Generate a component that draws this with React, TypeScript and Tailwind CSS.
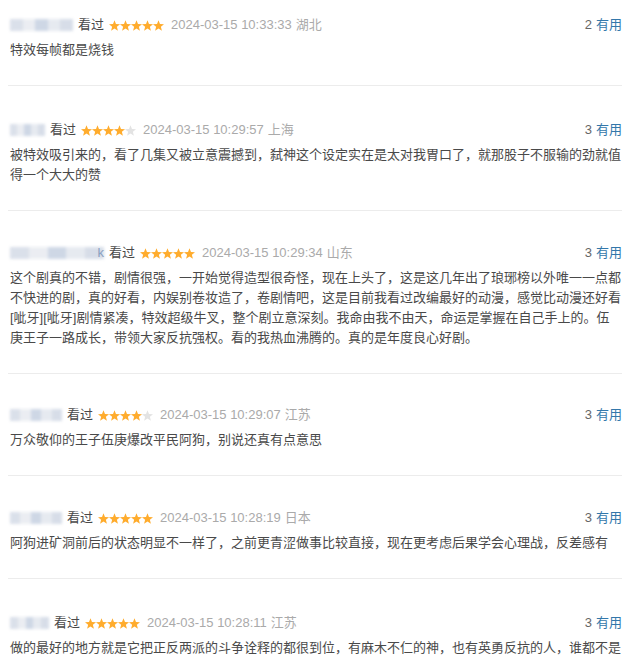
import React from "react";

type Item = {
  userW: number;
  suffix?: string;
  rating: number;
  time: string;
  loc: string;
  votes: number;
  text: string;
  pt: number;
};

const items: Item[] = [
  { userW: 63, rating: 5, time: "2024-03-15 10:33:33", loc: "湖北", votes: 2, text: "特效每帧都是烧钱", pt: 15 },
  { userW: 35, rating: 4, time: "2024-03-15 10:29:57", loc: "上海", votes: 3, text: "被特效吸引来的，看了几集又被立意震撼到，弑神这个设定实在是太对我胃口了，就那股子不服输的劲就值得一个大大的赞", pt: 34 },
  { userW: 94, suffix: "k", rating: 5, time: "2024-03-15 10:29:34", loc: "山东", votes: 3, text: "这个剧真的不错，剧情很强，一开始觉得造型很奇怪，现在上头了，这是这几年出了琅琊榜以外唯一一点都不快进的剧，真的好看，内娱别卷妆造了，卷剧情吧，这是目前我看过改编最好的动漫，感觉比动漫还好看[呲牙][呲牙]剧情紧凑，特效超级牛叉，整个剧立意深刻。我命由我不由天，命运是掌握在自己手上的。伍庚王子一路成长，带领大家反抗强权。看的我热血沸腾的。真的是年度良心好剧。", pt: 32 },
  { userW: 52, rating: 4, time: "2024-03-15 10:29:07", loc: "江苏", votes: 3, text: "万众敬仰的王子伍庚爆改平民阿狗，别说还真有点意思", pt: 31 },
  { userW: 52, rating: 5, time: "2024-03-15 10:28:19", loc: "日本", votes: 3, text: "阿狗进矿洞前后的状态明显不一样了，之前更青涩做事比较直接，现在更考虑后果学会心理战，反差感有", pt: 32 },
  { userW: 39, rating: 5, time: "2024-03-15 10:28:11", loc: "江苏", votes: 3, text: "做的最好的地方就是它把正反两派的斗争诠释的都很到位，有麻木不仁的神，也有英勇反抗的人，谁都不是", pt: 34 },
];

function starPoints(cx: number, cy: number, R: number, r: number) {
  const pts: string[] = [];
  for (let i = 0; i < 10; i++) {
    const rad = i % 2 === 0 ? R : r;
    const a = (Math.PI / 5) * i - Math.PI / 2;
    pts.push(`${(cx + rad * Math.cos(a)).toFixed(2)},${(cy + rad * Math.sin(a)).toFixed(2)}`);
  }
  return pts.join(" ");
}

function Stars({ n }: { n: number }) {
  return (
    <svg width="55" height="11" viewBox="0 0 55 11" className="shrink-0">
      {[0, 1, 2, 3, 4].map((i) => (
        <polygon
          key={i}
          points={starPoints(5.5 + i * 11, 6, 5.8, 2.5)}
          fill={i < n ? "#ffac2d" : "#e3e3e3"}
        />
      ))}
    </svg>
  );
}

function BlurName({ w, suffix }: { w: number; suffix?: string }) {
  return (
    <span className="relative inline-flex items-center h-5 shrink-0" style={{ width: w }}>
      <span className="absolute inset-y-[4px] left-0 right-0 flex blur-[1.5px] opacity-90">
        <span className="h-full flex-1 bg-[#d7dde8]" />
        <span className="h-full flex-1 bg-[#e9ecf1]" />
        <span className="h-full flex-1 bg-[#c9d3e3]" />
        <span className="h-full flex-1 bg-[#e4e8ef]" />
        <span className="h-full flex-1 bg-[#d3dae6]" />
      </span>
      {suffix && (
        <span className="absolute right-0 text-[13px] text-[#8aa0c0]">{suffix}</span>
      )}
    </span>
  );
}

export default function App() {
  return (
    <div
      className="w-[640px] h-[661px] overflow-hidden bg-white pl-[8px] pr-[18px]"
      style={{ fontFamily: '"Liberation Sans", Arial, "Noto Sans CJK SC", sans-serif' }}
    >
      {items.map((it, idx) => (
        <div
          key={idx}
          className="border-b border-[#ececec] pl-[2px] pb-[25px]"
          style={{ paddingTop: it.pt }}
        >
          <div className="flex items-center h-5 text-[13px] leading-5">
            <BlurName w={it.userW} suffix={it.suffix} />
            <span className="ml-[5px] text-[#494949]">看过</span>
            <span className="ml-[5px] flex items-center">
              <Stars n={it.rating} />
            </span>
            <span className="ml-[7px] text-[#aaaaaa]">{it.time}</span>
            <span className="ml-[4px] text-[#aaaaaa]">{it.loc}</span>
            <span className="ml-auto text-[#666666]">{it.votes}</span>
            <span className="ml-[4px] text-[#3377aa]">有用</span>
          </div>
          <p className="mt-[5px] text-[13px] leading-5 text-[#494949] break-all">{it.text}</p>
        </div>
      ))}
    </div>
  );
}
